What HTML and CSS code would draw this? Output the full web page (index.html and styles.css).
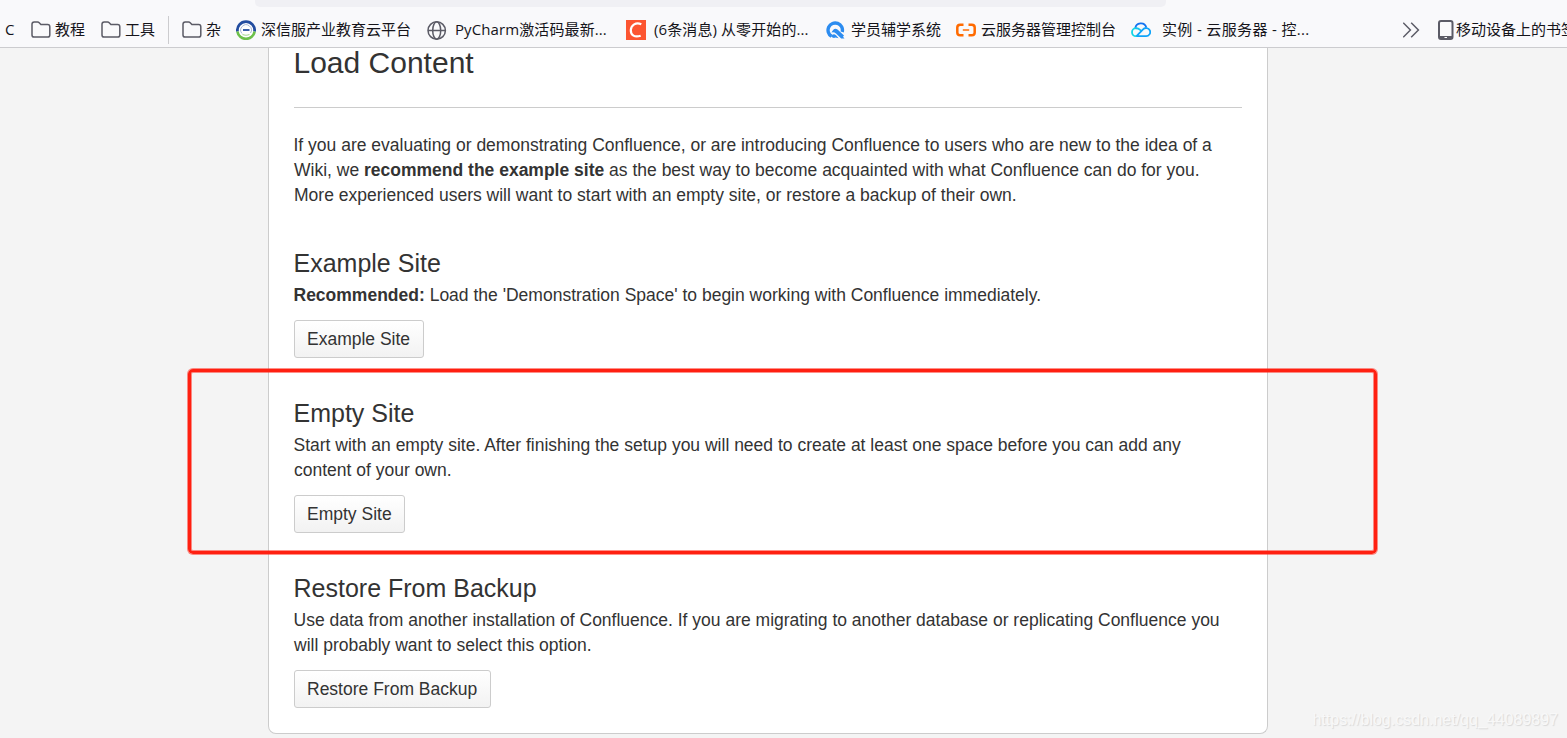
FILE: index.html
```html
<!DOCTYPE html>
<html lang="zh-CN">
<head>
    <meta charset="UTF-8">
    <meta name="viewport" content="width=device-width, initial-scale=1.0">
    <title>Load Content - Confluence</title>
    <link rel="stylesheet" href="styles.css">
</head>
<body>
    <svg class="defs">
        <symbol id="folder" viewBox="0 0 20 20">
            <path d="M1 4.200a2.200 2.200 0 0 1 2.200-2.200h3.400c.7 0 1.200.3 1.600.7L9.900 4.500h6.700a2.200 2.200 0 0 1 2.200 2.200v8.200a2.200 2.200 0 0 1-2.200 2.200H3.200A2.200 2.200 0 0 1 1 14.900z" fill="none" stroke="#5b5b66" stroke-width="1.500"/>
        </symbol>
    </svg>

    <div class="browser">
        <div class="urlbar"></div>
        <div class="bookmarks">
            <div class="item first"><span>C</span></div>
            <div class="item"><svg class="icon"><use href="#folder"/></svg><span>教程</span></div>
            <div class="item"><svg class="icon"><use href="#folder"/></svg><span>工具</span></div>
            <div class="sep"></div>
            <div class="item"><svg class="icon"><use href="#folder"/></svg><span>杂</span></div>
            <div class="item near">
                <svg class="icon" viewBox="0 0 20 20">
                    <circle cx="10" cy="10" r="9" fill="#fff"/>
                    <path d="M1.500 11.500A8.600 8.600 0 1 1 18.500 11.500" fill="none" stroke="#234da0" stroke-width="2.800"/>
                    <path d="M1.400 11.500A8.700 8.700 0 0 0 18.600 11.500" fill="none" stroke="#6cc04a" stroke-width="2.600"/>
                    <path d="M6 13.500A5.300 5.300 0 1 1 14.500 13" fill="none" stroke="#aab9d6" stroke-width="1"/>
                    <path d="M7 10h6.500" stroke="#234da0" stroke-width="1.800"/>
                    <path d="M6.500 14.500q3.500 1.500 7 0" fill="none" stroke="#a5d98f" stroke-width="1.200"/>
                </svg>
                <span>深信服产业教育云平台</span>
            </div>
            <div class="item wide">
                <svg class="icon" viewBox="0 0 20 20" fill="none" stroke="#5b5b66" stroke-width="1.500">
                    <circle cx="9.700" cy="10.500" r="8.700"/>
                    <ellipse cx="9.700" cy="10.500" rx="4" ry="8.700"/>
                    <path d="M1 10.500h17.400"/>
                </svg>
                <span class="pycharm">PyCharm激活码最新...</span>
            </div>
            <div class="item wide">
                <svg class="icon" viewBox="0 0 20 20">
                    <path d="M0 0h20v20H0z" fill="#fc5531"/>
                    <path d="M15.300 4.300C10 1.800 5.100 5 4.800 10c-.2 5.500 4 7.700 9.900 5.700" fill="none" stroke="#fff" stroke-width="2.200"/>
                </svg>
                <span class="msg">(6条消息) 从零开始的...</span>
            </div>
            <div class="item near">
                <svg class="icon" viewBox="0 0 20 20">
                    <path d="M5.500 16.300A7.200 7.200 0 1 1 16.200 12" fill="none" stroke="#2c8cf0" stroke-width="3.400"/>
                    <path d="M5.500 12.500q2.500-5.500 6-3l6.500 6-1 1.200 1.500 1.800h-3.300L10 13.500q-2-1.800-4.500-1z" fill="#2c8cf0"/>
                    <path d="M5 16.500q2.200-3.500 5-1.300l2.600 3-3.100-.8q-2 1.300-4.500-.9z" fill="#2c8cf0"/>
                </svg>
                <span>学员辅学系统</span>
            </div>
            <div class="item near">
                <svg class="icon" viewBox="0 0 20 20" fill="none" stroke="#ff6a00">
                    <path d="M7.500 4.700H4.200Q1.300 4.700 1.300 7.500v5q0 2.800 2.900 2.800H7.500M12.500 4.700h3.300q2.900 0 2.900 2.800v5q0 2.800-2.900 2.800H12.500" stroke-width="2.500"/>
                    <path d="M6.800 10h6.400" stroke-width="1.500"/>
                </svg>
                <span>云服务器管理控制台</span>
            </div>
            <div class="item cloud">
                <svg class="icon" viewBox="0 0 20 20" fill="none" stroke-width="1.800">
                    <path d="M4.300 8.500A5.600 5.600 0 0 1 15.300 7.500" stroke="#1473f0"/>
                    <path d="M5 8.200a4 4 0 0 0 0 8h1.500" stroke="#12d5e5"/>
                    <path d="M4.500 8.300q2.600-.3 4.300 1.300l1.600 1.500" stroke="#12c3ee"/>
                    <path d="M5.500 16.200H15A4.100 4.100 0 1 0 12 9.400L5.500 16.200" stroke="#10a4fa"/>
                </svg>
                <span class="instance">实例 - 云服务器 - 控...</span>
            </div>
            <svg class="more" viewBox="0 0 17 16" fill="none" stroke="#5b5b66" stroke-width="1.500">
                <path d="M.2.700 7.400 8 .2 15.300M8.200.700l7.200 7.300-7.200 7.300"/>
            </svg>
            <div class="item mobile">
                <svg class="phone" viewBox="0 0 16 20">
                    <rect x="1" y="1" width="13.500" height="18" rx="2" fill="none" stroke="#5b5b66" stroke-width="2"/>
                    <path d="M1 16h13.500v3H1z" fill="#5b5b66"/>
                    <path d="M6.500 17.500h2.500" stroke="#fff"/>
                </svg>
                <span>移动设备上的书签</span>
            </div>
        </div>
    </div>

    <div class="panel">
        <h1>Load Content</h1>
        <p>If you are evaluating or demonstrating Confluence, or are introducing Confluence to users who are new to the idea of a<br>
            Wiki, we <strong>recommend the example site</strong> as the best way to become acquainted with what Confluence can do for you.<br>
            More experienced users will want to start with an empty site, or restore a backup of their own.</p>

        <div class="option">
            <h2>Example Site</h2>
            <p><strong>Recommended:</strong> Load the 'Demonstration Space' to begin working with Confluence immediately.</p>
            <button>Example Site</button>
        </div>
        <div class="option">
            <h2>Empty Site</h2>
            <p>Start with an empty site. After finishing the setup you will need to create at least one space before you can add any<br>content of your own.</p>
            <button>Empty Site</button>
        </div>
        <div class="option">
            <h2>Restore From Backup</h2>
            <p>Use data from another installation of Confluence. If you are migrating to another database or replicating Confluence you<br>will probably want to select this option.</p>
            <button>Restore From Backup</button>
        </div>
    </div>

    <div class="marker"></div>
    <div class="watermark">https://blog.csdn.net/qq_44089897</div>
</body>
</html>
```
FILE: styles.css
```css
*{
    box-sizing: border-box;
    margin: 0;
    padding: 0;
}
body{
    position: relative;
    height: 738px;
    overflow: hidden;
    background-color: #f4f4f4;
    color: #333;
    font-family: "Liberation Sans", Arial, sans-serif;
    font-size: 17.5px;
    line-height: 25px;
}
.defs{
    display: none;
}

/* browser toolbar */
.browser{
    height: 48px;
    background-color: #f9f9fb;
    border-bottom: 1px solid #cccccf;
}
.urlbar{
    width: 911px;
    height: 7px;
    margin-left: 255px;
    background-color: #f0f0f4;
    border-radius: 0 0 5px 5px;
}
.bookmarks{
    display: grid;
    grid-template-columns: 31px 70px 67px 14px 54px 191px 199px 200px 130px 175px 272px 35px 129px;
    align-items: center;
    height: 40px;
    padding-top: 6px;
    color: #15141a;
    font-family: "Open Sans", "Noto Sans CJK SC", sans-serif;
    font-size: 15px;
    line-height: 20px;
    white-space: nowrap;
}
.item{
    display: flex;
    align-items: center;
    gap: 4px;
}
.first{
    padding-left: 5px;
}
.near{
    gap: 5px;
}
.wide{
    gap: 8px;
}
.item span{
    flex: none;
    margin-bottom: 2px;
}
.item .pycharm{
    letter-spacing: .1px;
}
.item .msg{
    letter-spacing: .1px;
}
.item .instance{
    letter-spacing: .35px;
}
.icon{
    flex: none;
    width: 20px;
    height: 20px;
}
.cloud{
    gap: 11px;
}
.sep{
    width: 1px;
    height: 28px;
    background-color: #cccccf;
}
.more{
    width: 17px;
    height: 16px;
}
.mobile{
    gap: 2px;
    overflow: hidden;
}
.phone{
    flex: none;
    width: 16px;
    height: 20px;
}

/* setup page */
.panel{
    width: 1000px;
    height: 686px;
    margin-left: 268px;
    padding: 0 25px;
    background-color: #fff;
    border: 1px solid #ccc;
    border-top: 0;
    border-radius: 0 0 8px 8px;
}
h1{
    height: 60px;
    margin-bottom: 25px;
    border-bottom: 1px solid #ccc;
    font-size: 30px;
    font-weight: normal;
    line-height: 30px;
}
h1, h2, p{
    text-indent: -.5px;
}
h2{
    margin-bottom: 4px;
    font-size: 25px;
    font-weight: normal;
    line-height: 31px;
}
.option{
    margin-top: 40px;
}
button{
    display: block;
    height: 38px;
    margin-top: 12px;
    padding: 0 12.5px 0 12px;
    color: #333;
    background: linear-gradient(#fff, #f2f2f2);
    border: 1px solid #ccc;
    border-radius: 3px;
    font-family: inherit;
    font-size: 17.5px;
}

/* red frame drawn over the page */
.marker{
    position: absolute;
    left: 188px;
    top: 369px;
    width: 1189px;
    height: 185px;
    border: 3px solid #ff2011;
    border-radius: 5px;
    box-shadow: 0 0 0 1px rgba(255, 32, 17, .5), inset 0 0 0 1px rgba(255, 32, 17, .5);
}
.watermark{
    position: absolute;
    right: 9px;
    bottom: 6px;
    color: #f8f8f8;
    font-size: 16px;
    text-shadow: 1px 1px 1px #d8d8d8;
}
```
